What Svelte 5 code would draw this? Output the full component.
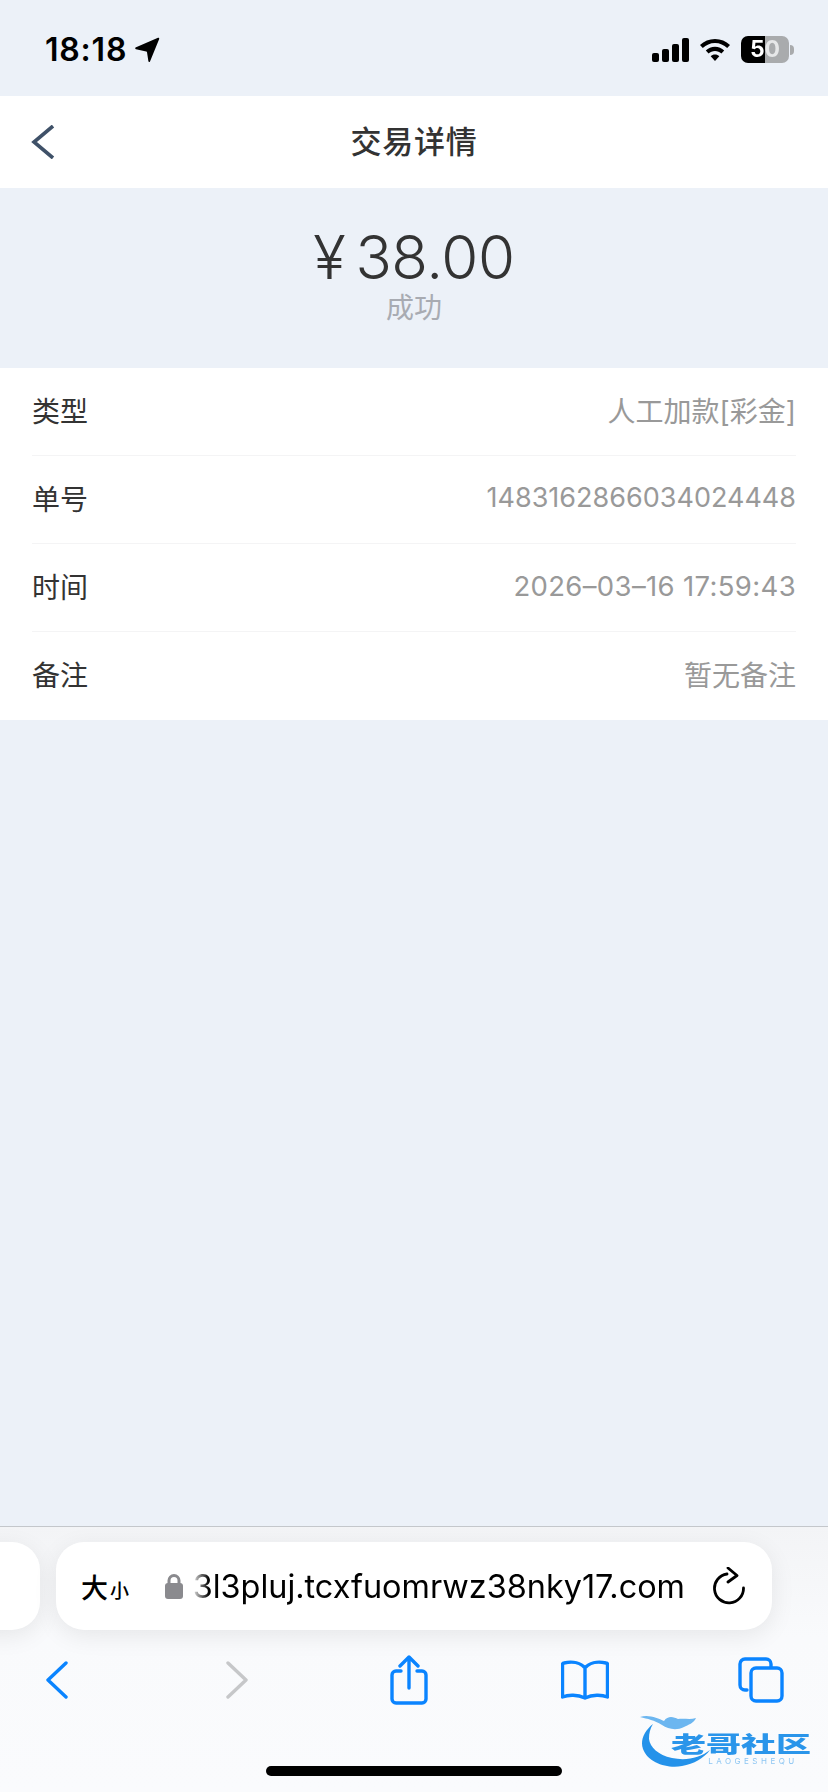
<script>
    const rows = [
        { label: "类型", value: "人工加款[彩金]", kind: "cjk" },
        { label: "单号", value: "1483162866034024448", kind: "serial" },
        { label: "时间", value: "2026–03–16 17:59:43", kind: "date" },
        { label: "备注", value: "暂无备注", kind: "cjk" }
    ];
</script>

<div class="page">
    <div class="status">
        <div class="clock">
            <span>18:18</span>
            <svg width="26" height="26" viewBox="0 0 26 26"><path d="M1.500 10.500 24 .8c.8-.3 1.500.4 1.200 1.200L16 24.500c-.3.8-1.500.7-1.600-.2l-1.400-9c0-.5-.3-.8-.8-.8l-10.200-2.300c-.8-.2-1-1.300-.5-1.700z" /></svg>
        </div>
        <div class="indicators">
            <svg width="37" height="24" viewBox="0 0 37 24"><rect x="0" y="15" width="7" height="9" rx="2" /><rect x="10" y="11" width="7" height="13" rx="2" /><rect x="20" y="6" width="7" height="18" rx="2" /><rect x="30" y="0" width="7" height="24" rx="2" /></svg>
            <svg class="wifi" width="32" height="24" viewBox="0 0 32 24"><path d="M16 1c5.800 0 11 2.300 15 6l-2.800 3C25 7 20.800 5 16 5S7 7 3.800 10L1 7c4-3.700 9.200-6 15-6z" /><path d="M16 8.800c3.600 0 6.800 1.400 9.200 3.700l-2.800 3c-1.700-1.600-3.900-2.600-6.400-2.600s-4.700 1-6.400 2.600l-2.800-3c2.400-2.300 5.600-3.700 9.200-3.700z" /><path d="M16 16.500c1.700 0 3.200.6 4.300 1.700L16 23l-4.300-4.800c1.100-1.100 2.600-1.700 4.300-1.700z" /></svg>
            <div class="battery">
                <div class="cell"><span class="level">50</span></div>
                <i class="nub"></i>
            </div>
        </div>
    </div>

    <header>
        <svg class="back" width="24" height="34" viewBox="0 0 24 34"><path d="M22 1 3 17l19 16" /></svg>
        <h1>交易详情</h1>
    </header>

    <section class="hero">
        <div class="amount"><span class="yen">¥</span>38.00</div>
        <div class="state">成功</div>
    </section>

    <section class="list">
        {#each rows as row}
            <div class="row">
                <span class="label">{row.label}</span>
                <span class="value {row.kind}">{row.value}</span>
            </div>
        {/each}
    </section>

    <div class="spacer"></div>

    <footer>
        <div class="tabs">
            <div class="prev-tab"></div>
            <div class="url-bar">
                <span class="aa">大<small>小</small></span>
                <svg class="lock" width="18" height="26" viewBox="0 0 18 26"><path class="shackle" d="M4 12V7.500a5 5 0 0 1 10 0V12" /><rect x="0" y="10" width="18" height="16" rx="3" /></svg>
                <div class="url"><span>3l3pluj.tcxfuomrwz38nky17.com</span></div>
                <svg class="reload" width="32" height="38" viewBox="0 0 32 38"><path d="M14 7A14.500 14.500 0 1 0 30.500 21" /><path d="M15 1l9 7.500-9 6.500" /></svg>
            </div>
        </div>
        <nav>
            <svg width="24" height="38" viewBox="0 0 24 38"><path class="blue" d="M21 2 3 19l18 17" /></svg>
            <svg class="fwd" width="24" height="38" viewBox="0 0 24 38"><path class="gray" d="m3 2 18 17L3 36" /></svg>
            <svg width="38" height="50" viewBox="0 0 38 50"><path class="blue" d="M11 16H6a4 4 0 0 0-4 4v24a4 4 0 0 0 4 4h26a4 4 0 0 0 4-4V20a4 4 0 0 0-4-4h-5M19 33V2M10 11l9-9 9 9" /></svg>
            <svg width="48" height="40" viewBox="0 0 48 40"><path class="blue" d="M24 8C20 3 12 1 3 3a1.500 1.500 0 0 0-1.500 1.500V37c6-2.500 15-2.500 22.500 1 7.500-3.500 16.500-3.500 22.500-1V4.500A1.500 1.500 0 0 0 45 3C36 1 28 3 24 8zM24 8v29" /></svg>
            <svg width="46" height="46" viewBox="0 0 46 46"><path class="blue" d="M9 33H7a5 5 0 0 1-5-5V7a5 5 0 0 1 5-5h21a5 5 0 0 1 5 5v3" /><rect class="blue" x="13" y="11" width="31" height="33" rx="5" /></svg>
        </nav>
        <div class="home-bar"></div>
        <div class="logo">
            <svg width="80" height="62" viewBox="0 0 80 62">
                <path d="M13 13C4 20 0 30 3 38c5 14 25 20 39 17 12-2 22-8 28-16-10 8-24 11-38 8C18 44 10 36 9 28c0-6 1-10 4-15z" />
                <path class="head" d="M0 6c8-3 18 1 24 4 4-6 10-4 14-2 6-1 12 1 18-1-2 5-8 7-12 9-8 4-16 2-22-2C14 9 8 8 0 6z" />
            </svg>
            <div class="logo-text">
                <span class="cn">老哥社区</span>
                <span class="en">LAOGESHEQU</span>
            </div>
        </div>
    </footer>
</div>

<style>
:global(body) {
    margin: 0;
    background: #ecf1f8;
}

.page {
    position: relative;
    width: 828px;
    height: 1792px;
    display: flex;
    flex-direction: column;
    overflow: hidden;
    background: #ecf1f8;
    font-family: Inter, "Noto Sans CJK SC", sans-serif;
}

.status {
    height: 96px;
    flex: none;
    display: flex;
    align-items: center;
    justify-content: space-between;
    padding: 3px 34px 0 45px;
    box-sizing: border-box;
    color: #000;
}

.clock {
    display: flex;
    align-items: center;
    gap: 7px;
    font-size: 32px;
    font-weight: 600;
    letter-spacing: 0.8px;
}

.indicators {
    display: flex;
    align-items: center;
    gap: 10px;
}

.status svg {
    fill: #000;
}

.battery {
    display: flex;
    align-items: center;
    gap: 1px;
}

.cell {
    width: 48px;
    height: 27px;
    border-radius: 7px;
    background: linear-gradient(to right, #000 50%, #a9abad 50%);
    display: flex;
    align-items: center;
    justify-content: center;
}

.level {
    color: #fff;
    font-size: 23px;
    font-weight: 700;
    line-height: 1;
    background: linear-gradient(to right, #fff 52%, #e6e7e8 52%);
    -webkit-background-clip: text;
    background-clip: text;
    -webkit-text-fill-color: transparent;
}

.nub {
    width: 4px;
    height: 10px;
    border-radius: 0 4px 4px 0;
    background: #a9abad;
}

header {
    height: 92px;
    flex: none;
    box-sizing: border-box;
    padding-bottom: 6px;
    background: #fff;
    display: flex;
    align-items: center;
    justify-content: center;
    position: relative;
}

.back {
    position: absolute;
    left: 31px;
    top: 29px;
    fill: none;
    stroke: #3f5168;
    stroke-width: 3.600;
}

h1 {
    margin: 0;
    font-size: 31px;
    font-weight: 500;
    color: #333;
    letter-spacing: 0.8px;
}

.hero {
    height: 180px;
    flex: none;
    box-sizing: border-box;
    padding-top: 34px;
    display: flex;
    flex-direction: column;
    align-items: center;
    color: #333;
}

.amount {
    font-size: 60px;
    line-height: 70px;
    font-weight: 350;
    letter-spacing: -0.4px;
    display: flex;
    align-items: baseline;
}

.yen {
    font-size: 60px;
    margin-right: 10px;
}

.state {
    color: #a8abb2;
    font-size: 28px;
    line-height: 36px;
    margin-top: -2px;
}

.list {
    flex: none;
    background: #fff;
    padding: 0 32px;
}

.row {
    height: 88px;
    display: flex;
    align-items: center;
    justify-content: space-between;
    box-sizing: border-box;
    border-bottom: 1.500px solid #f4f4f5;
}

.row:last-child {
    border-bottom: none;
}

.label {
    color: #333;
    font-size: 28px;
    position: relative;
    top: -2px;
}

.value {
    color: #999;
    position: relative;
    top: -2px;
}

.cjk {
    font-size: 28px;
}

.serial {
    font-size: 27px;
}

.date {
    font-size: 27.500px;
    letter-spacing: 0.35px;
}

.spacer {
    flex: 1;
}

footer {
    position: relative;
    height: 266px;
    flex: none;
    box-sizing: border-box;
    border-top: 1px solid #c4c7cb;
    background: linear-gradient(to bottom, #f3f4f6 0, #f9fafc 110px, #fafbfd 100%);
}

.tabs {
    display: flex;
    gap: 16px;
    padding-top: 15px;
    margin-left: -40px;
}

.prev-tab, .url-bar {
    height: 88px;
    border-radius: 28px;
    background: #fff;
    box-shadow: 0 6px 24px rgba(0, 0, 0, 0.08);
    flex: none;
}

.prev-tab {
    width: 80px;
}

.url-bar {
    width: 716px;
    box-sizing: border-box;
    display: flex;
    align-items: center;
    padding: 0 29px 0 25px;
}

.aa {
    font-size: 27px;
    font-weight: 500;
    color: #000;
    width: 60px;
    flex: none;
}

.aa small {
    font-size: 19px;
    margin-left: 2px;
}

.lock {
    flex: none;
    margin-left: 24px;
    fill: #8a8a8e;
}

.lock .shackle {
    fill: none;
    stroke: #8a8a8e;
    stroke-width: 3;
}

.url {
    width: 494px;
    margin: 0 28px 0 8px;
    flex: none;
    overflow: hidden;
    display: flex;
    justify-content: flex-end;
    white-space: nowrap;
    font-size: 32.400px;
    color: #000;
    -webkit-mask-image: linear-gradient(to right, transparent 0, #000 18px);
    mask-image: linear-gradient(to right, transparent 0, #000 18px);
}

.reload {
    flex: none;
    fill: none;
    stroke: #000;
    stroke-width: 2.800;
    stroke-linecap: round;
    stroke-linejoin: round;
}

nav {
    height: 100px;
    display: grid;
    grid-template-columns: repeat(5, 176px);
    justify-items: center;
    align-items: center;
    margin-left: -31px;
}

nav svg {
    fill: none;
}

.fwd {
    margin-left: 8px;
}

.blue, .gray {
    fill: none;
    stroke: #0a84ff;
    stroke-width: 3.400;
    stroke-linecap: round;
    stroke-linejoin: round;
}

.gray {
    stroke: #c6c7c9;
}

.home-bar {
    position: absolute;
    left: 266px;
    bottom: 16px;
    width: 296px;
    height: 10px;
    border-radius: 5px;
    background: #000;
}

.logo {
    position: absolute;
    left: 640px;
    top: 184px;
    width: 176px;
    height: 62px;
    filter: blur(0.5px);
}

.logo svg {
    position: absolute;
    left: 0;
    top: 0;
    fill: #2492ea;
}

.logo .head {
    fill: #6cb6f0;
}

.logo-text {
    position: absolute;
    left: 31px;
    top: 20px;
    display: flex;
    flex-direction: column;
    align-items: center;
    width: 140px;
    color: #2a95ea;
}

.cn {
    font-size: 35px;
    line-height: 26px;
    font-weight: 900;
    white-space: nowrap;
    transform: scaleY(0.62);
}

.en {
    font-size: 8px;
    line-height: 9px;
    letter-spacing: 3.500px;
    margin-left: 24px;
    color: #8dc6f2;
}
</style>
